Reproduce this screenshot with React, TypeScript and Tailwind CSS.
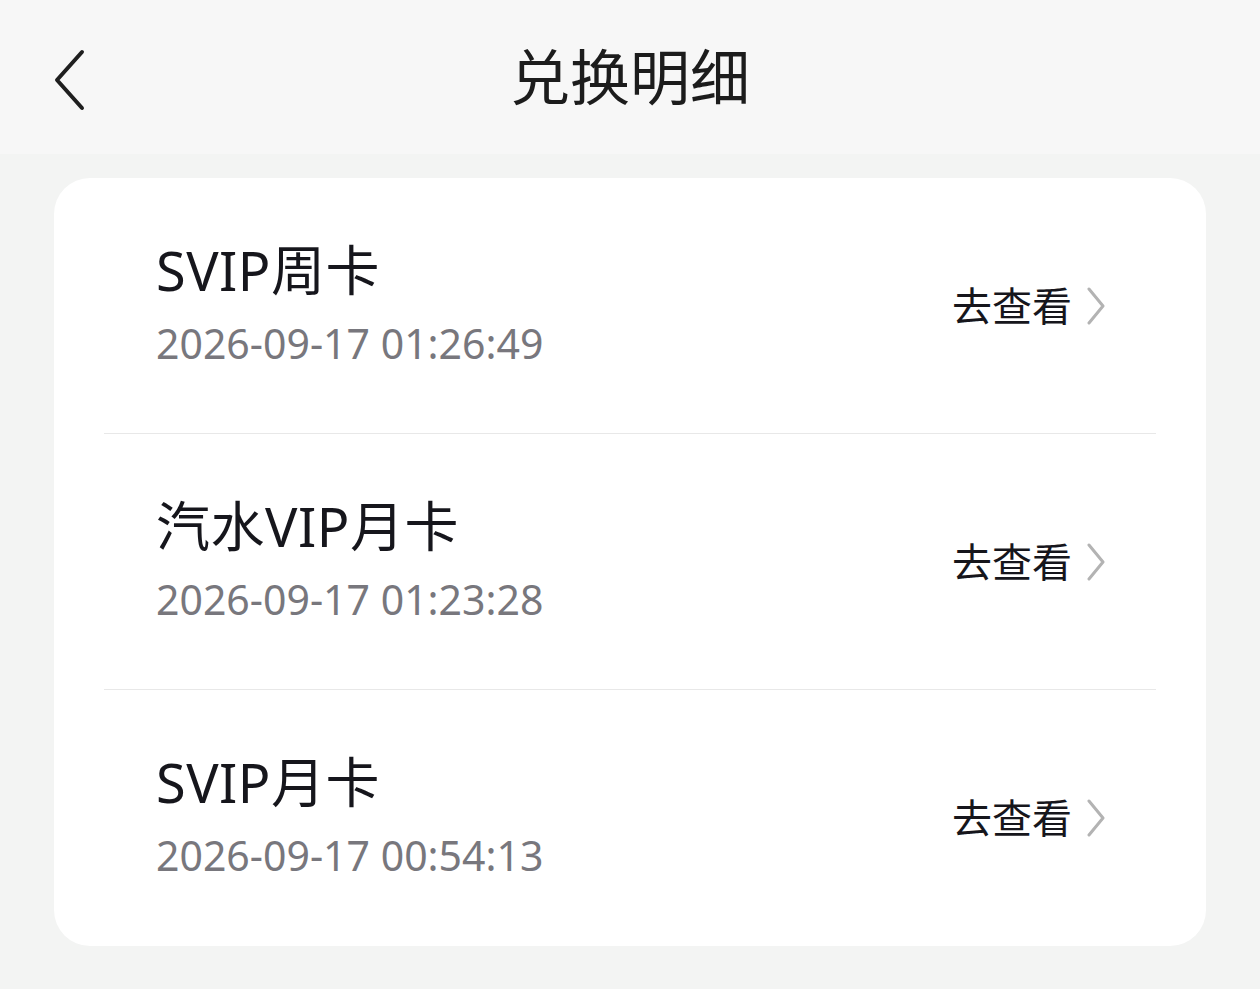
import React from "react";

const records = [
  { id: 1, name: "SVIP周卡", time: "2026-09-17 01:26:49" },
  { id: 2, name: "汽水VIP月卡", time: "2026-09-17 01:23:28" },
  { id: 3, name: "SVIP月卡", time: "2026-09-17 00:54:13" },
];

const font = {
  fontFamily: '"Noto Sans", "Noto Sans CJK SC", sans-serif',
};

const App = () => {
  return (
    <div className="min-h-[989px] w-full bg-[#f3f4f3]" style={font}>
      {/* Header */}
      <header className="relative flex h-[154px] items-center justify-center bg-[#f7f7f7]">
        <button className="absolute left-[46px] top-[48px] flex h-[64px] w-[44px] items-center justify-center" aria-label="back">
          <svg width="36" height="62" viewBox="0 0 36 62" fill="none">
            <path d="M32 3 L7 31 L32 59" stroke="#1f1f1f" strokeWidth="4" strokeLinecap="round" strokeLinejoin="round" />
          </svg>
        </button>
        <h1 className="text-[60px] font-normal leading-none text-[#1c1c1c]">兑换明细</h1>
      </header>

      {/* List card */}
      <div className="mx-[54px] mt-[24px] rounded-[36px] bg-white px-[50px]">
        {records.map((r, i) => (
          <div
            key={r.id}
            className={`flex h-[256px] items-center justify-between pl-[52px] pr-[50px] ${
              i < records.length - 1 ? "border-b border-[#e8e8e8]" : ""
            }`}
          >
            <div className="flex flex-col">
              <span className="text-[54px] leading-[54px] tracking-[0.5px] text-[#16161c]">{r.name}</span>
              <span className="mt-[20px] text-[41px] leading-[52px] text-[#78777d]">{r.time}</span>
            </div>
            <div className="flex items-center gap-[14px]">
              <span className="text-[40px] leading-none text-[#16161c]">去查看</span>
              <svg width="20" height="38" viewBox="0 0 20 38" fill="none">
                <path d="M3 2 L17 19 L3 36" stroke="#b3b3b3" strokeWidth="3" strokeLinecap="round" strokeLinejoin="round" />
              </svg>
            </div>
          </div>
        ))}
      </div>
    </div>
  );
};

export default App;
